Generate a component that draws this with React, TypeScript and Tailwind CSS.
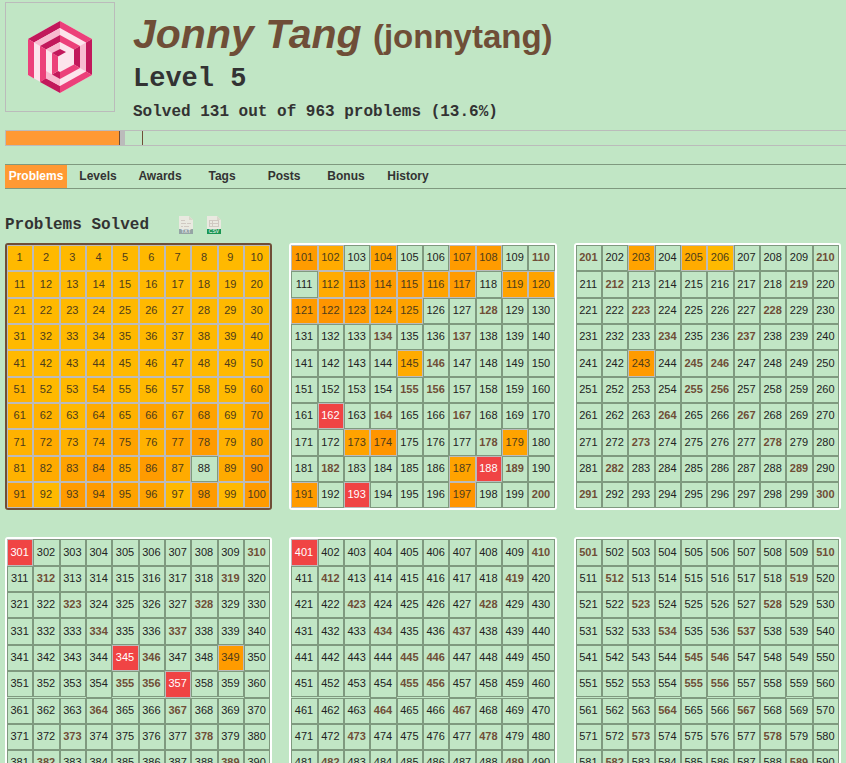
import React from "react";

const tones = ["bg-[#ffb900]", "bg-[#ffb200]", "bg-[#ffab00]", "bg-[#ffa300]", "bg-[#ff9b00]", "bg-[#ff9500]"];

// One digit per problem, an index into the difficulty tones.
const firstHundred =
  "0000000000" +
  "0000000000" +
  "0000000000" +
  "0000000000" +
  "0000000000" +
  "1001000002" +
  "1102131303" +
  "1212313413" +
  "1234242025" +
  "3044330404";

const solvedLater: Record<number, number> = {
  101: 4, 102: 2, 104: 3, 107: 4, 108: 4, 112: 2, 113: 4, 114: 4, 115: 4, 116: 3, 117: 4,
  119: 3, 120: 3, 121: 4, 122: 5, 123: 4, 124: 3, 125: 3, 145: 2, 173: 3, 174: 5, 179: 3,
  187: 3, 191: 4, 197: 5, 203: 3, 205: 2, 206: 0, 243: 4, 349: 4,
};

const starred = new Set([162, 188, 193, 301, 345, 357, 401]);

const bonus = new Set([
  110, 128, 134, 137, 146, 155, 156, 164, 167, 178, 182, 189, 200,
  201, 210, 212, 219, 223, 228, 234, 237, 245, 246, 255, 256, 264, 267, 273, 278, 282, 289, 291, 300,
  310, 312, 319, 323, 328, 334, 337, 346, 355, 356, 364, 367, 373, 378, 382, 389, 400,
  410, 412, 419, 423, 428, 434, 437, 445, 446, 455, 456, 464, 467, 473, 478, 482, 489, 491, 500,
  501, 510, 512, 519, 523, 528, 534, 537, 545, 546, 555, 556, 564, 567, 573, 578, 582, 589, 591, 600,
]);

function cellStyle(n: number) {
  const tone = n <= 100 ? (n === 88 ? undefined : Number(firstHundred[n - 1])) : solvedLater[n];
  if (tone !== undefined) return `border-[#bbb] text-[#4d3c1c] ${tones[tone]}`;
  if (starred.has(n)) return "border-[#bbb] bg-[#f04444] text-white";
  if (bonus.has(n)) return "border-[#7f997f] font-bold text-[#6f4e37]";
  return "border-[#7f997f] text-[#222]";
}

function Block({ start, complete }: { start: number; complete: boolean }) {
  return (
    <div className={`grid grid-cols-10 rounded-[3px] border-2 ${complete ? "border-[#6f4e37]" : "border-white"}`}>
      {Array.from({ length: 100 }, (_, i) => start + i).map((n) => (
        <a
          key={n}
          href={`#problem-${n}`}
          className={`flex aspect-square min-w-0 items-center justify-center border pr-px pb-px text-[11px] leading-none ${cellStyle(n)}`}
        >
          {n}
        </a>
      ))}
    </div>
  );
}

function Logo() {
  return (
    <svg viewBox="0 0 64 72" className="h-[72px] w-[64px]" aria-label="Profile picture">
      <path d="M0 18 32 0 64 18V54L32 72 0 54Z" fill="#fce4ec" />
      <path d="M0 18 32 0V7L6 21.500Z" fill="#c2185b" />
      <path d="M32 0 64 18 58 21.500 32 7Z" fill="#ec407a" />
      <path d="M64 18V54L58 50.500V21.500Z" fill="#c2185b" />
      <path d="M64 54 32 72V65L58 50.500Z" fill="#ec407a" />
      <path d="M32 72 12 61 18 57 32 65Z" fill="#c2185b" />
      <path d="M0 18 6 21.500V57.500L0 54Z" fill="#ec407a" />
      <path d="M6 21.500 32 7V14L12 25Z" fill="#f8bbd0" />
      <path d="M58 21.500V50.500L52 47V25Z" fill="#f8bbd0" />
      <path d="M18 50 32 58V65L18 57.500Z" fill="#f8bbd0" />
      <path d="M12 25 32 14V21L18 28.500Z" fill="#c2185b" />
      <path d="M32 14 52 25 46 28.500 32 21Z" fill="#ec407a" />
      <path d="M52 25V47L46 43.500V28.500Z" fill="#c2185b" />
      <path d="M52 47 32 58V51L46 43.500Z" fill="#ec407a" />
      <path d="M32 58 24 53.500 30 50 32 51Z" fill="#c2185b" />
      <path d="M12 25 18 28.500V57.500L12 61Z" fill="#ec407a" />
      <path d="M18 28.500 32 21V28L24 32Z" fill="#f8bbd0" />
      <path d="M24 32 30 35.500V50L24 53.500Z" fill="#ec407a" />
      <path d="M24 32 32 28 38 31 30 35.500Z" fill="#c2185b" />
    </svg>
  );
}

function FileIcon({ csv = false }: { csv?: boolean }) {
  return (
    <svg viewBox="0 0 14 18" className="h-[18px] w-[14px]" aria-hidden="true">
      <path d="M0 0H10L14 4V13H0Z" fill="#e9e9e0" />
      <path d="M10 0 14 4H10Z" fill="#d9d7ca" />
      <rect y="13" width="14" height="5" fill={csv ? "#1a9652" : "#95a5a5"} />
      {csv ? (
        <path d="M2 4.500H12M2 7.500H12M2 10.500H12M2.500 4.500V10.500M5.500 4.500V10.500M11.500 4.500V10.500" stroke="#d0c9c2" fill="none" />
      ) : (
        <path d="M2 4.500H6M2 7.500H7M8 7.500H12M2 10.500H4M5 10.500H10" stroke="#d0c9c2" fill="none" />
      )}
      <text x="7" y="17" textAnchor="middle" fontSize="5" fill="#fff">
        {csv ? "CSV" : "TXT"}
      </text>
    </svg>
  );
}

const tabs = ["Problems", "Levels", "Awards", "Tags", "Posts", "Bonus", "History"];

export default function App() {
  return (
    <div className="min-h-screen bg-[#c1e6c5] pb-6 font-['Liberation_Sans',Arial,sans-serif] text-[#333]">
      <header className="flex gap-[18px] pt-[2px] pl-[5px]">
        <div className="flex size-[110px] shrink-0 items-center justify-center border border-[#bbb]">
          <Logo />
        </div>
        <div className="pt-[9px] font-['Liberation_Mono',monospace] font-bold">
          <h1 className="font-['Liberation_Sans',Arial,sans-serif] text-[33px] leading-[47px] text-[#6f4e37]">
            <span className="text-[41px] italic">Jonny Tang </span>(jonnytang)
          </h1>
          <h2 className="text-[27px] leading-[38px]">Level 5</h2>
          <h3 className="pt-[2px] text-base leading-6">Solved 131 out of 963 problems (13.6%)</h3>
        </div>
      </header>

      <div className="mt-[6px] ml-[5px] flex h-4 border border-r-0 border-[#bbb]" role="img" aria-label="13.6% solved">
        <div className="w-[114px] border-r border-[#6f4e37] bg-[#ff9933]" />
        <div className="w-[5px] bg-[#bbb]" />
        <div className="w-[18px] border-r border-[#6f4e37]" />
      </div>

      <nav className="mt-[18px] ml-[5px] flex border-y border-[#7f997f] text-[12px] leading-[23px] font-bold">
        {tabs.map((tab, i) => (
          <a key={tab} href={`#${tab}`} className={`w-[62px] text-center ${i === 0 ? "bg-[#ff9933] text-white" : ""}`}>
            {tab}
          </a>
        ))}
      </nav>

      <main className="px-[5px]">
        <div className="flex h-[54px] items-center pt-[18px]">
          <h3 className="w-[174px] font-['Liberation_Mono',monospace] text-base leading-6 font-bold">Problems Solved</h3>
          <a href="#txt" aria-label="Download TXT" className="mr-[14px]">
            <FileIcon />
          </a>
          <a href="#csv" aria-label="Download CSV">
            <FileIcon csv />
          </a>
        </div>
        <div className="grid grid-cols-3 gap-x-[17px] gap-y-[27px]">
          {[1, 101, 201, 301, 401, 501].map((start) => (
            <Block key={start} start={start} complete={start === 1} />
          ))}
        </div>
      </main>
    </div>
  );
}
